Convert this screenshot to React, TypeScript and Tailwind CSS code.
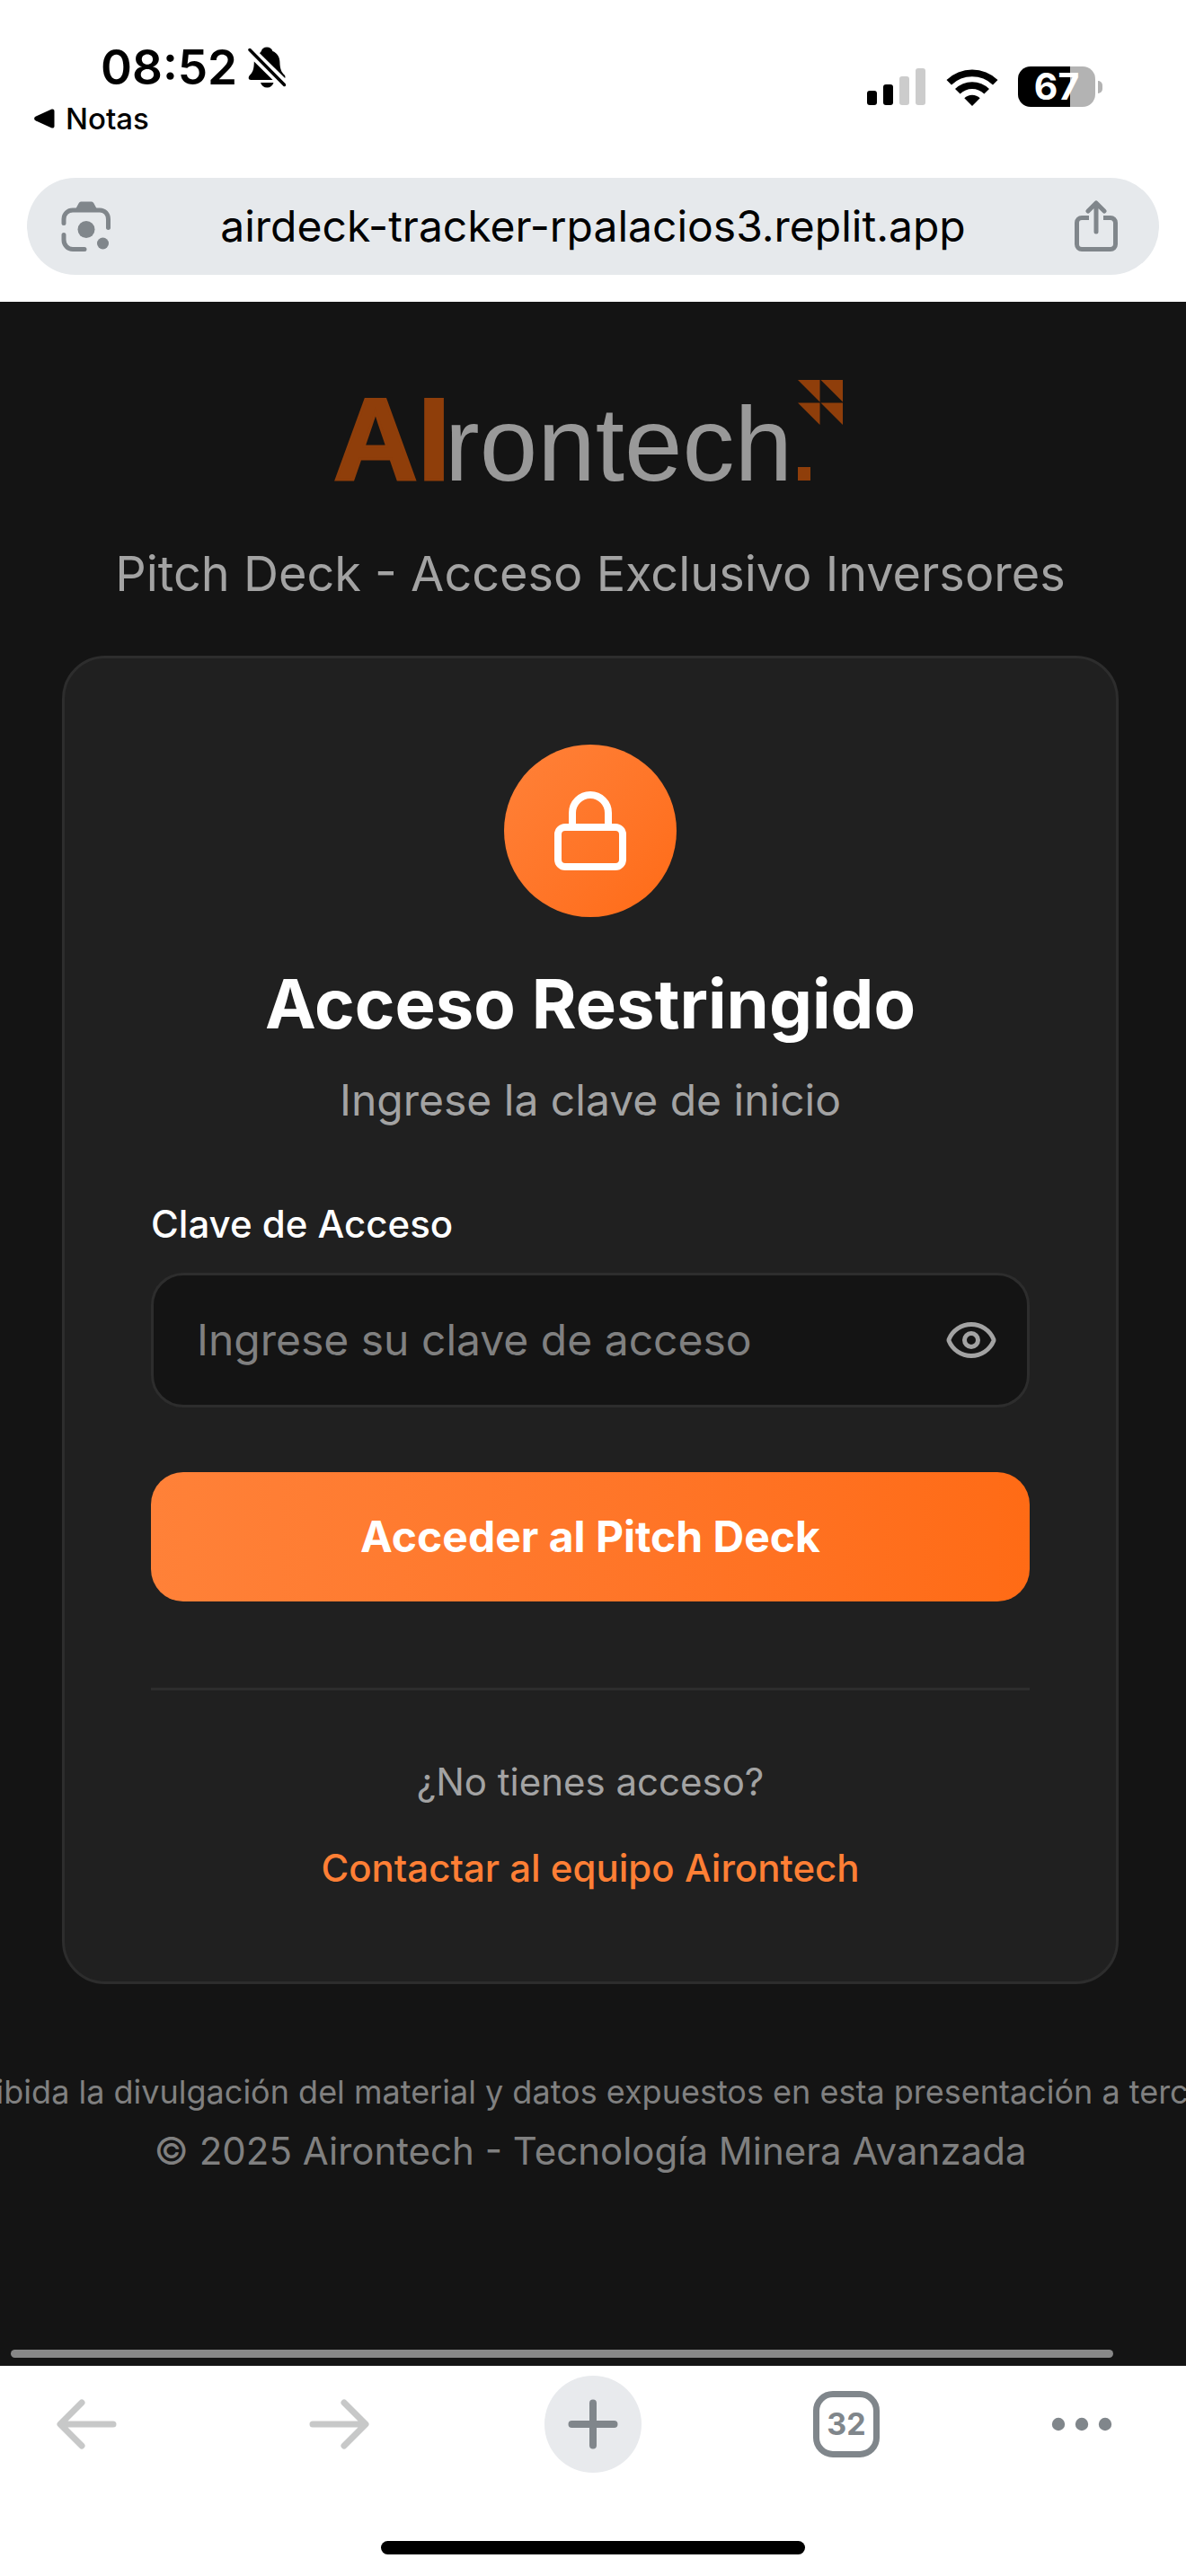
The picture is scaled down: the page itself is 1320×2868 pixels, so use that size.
import { useState } from "react";
import { Eye, EyeOff, Lock } from "lucide-react";

function BellOffIcon() {
  return (
    <svg className="h-[46px] w-[42px]" viewBox="0 0 42 46" aria-label="Silencio">
      <path
        d="M21 0.5c3.2 0 5.600 1.800 6.400 4.400 5.200 2 7.800 6.400 8 12 .2 7.600 1.600 11 5.200 14.600 1 1 1 2.500.6 3.600L13 7.200c.8-.9 1.300-1.600 1.800-2.300.8-2.600 3-4.400 6.200-4.400Z"
        fill="#000"
      />
      <path d="M6.800 16.500 27.500 37H3.200C.4 37 0 34 1.800 32c3.200-3.300 5-6.500 5-15.500Z" fill="#000" />
      <path d="M14 40h14.500c-1 3.500-3.700 5.500-7.200 5.500S15 43.500 14 40Z" fill="#000" />
      <path d="M2 3.500 40.500 42.500" stroke="#000" strokeWidth="3.500" strokeLinecap="round" />
    </svg>
  );
}

function SignalIcon() {
  return (
    <svg className="h-[42px] w-[66px]" viewBox="0 0 66 42" aria-label="Cobertura">
      <rect x="0" y="25" width="11" height="16" rx="3" fill="#000" />
      <rect x="18" y="18" width="11" height="23" rx="3" fill="#000" />
      <rect x="36" y="9" width="11" height="32" rx="3" fill="#ccc" />
      <rect x="54" y="0" width="11" height="41" rx="3" fill="#ccc" />
    </svg>
  );
}

function WifiIcon() {
  return (
    <svg className="h-[42px] w-[58px]" viewBox="0 0 58 42" aria-label="Wi-Fi">
      <path d="M0.500 13a41 41 0 0 1 57 0l-5.500 5.500a33 33 0 0 0-46 0Z" fill="#000" />
      <path d="M10 23a27 27 0 0 1 38 0l-5.600 5.600a19 19 0 0 0-26.800 0Z" fill="#000" />
      <path d="M20.300 33.300a12.300 12.300 0 0 1 17.400 0L29 42Z" fill="#000" />
    </svg>
  );
}

function LensIcon() {
  return (
    <svg className="h-14 w-14" viewBox="0 0 56 56" fill="none" aria-hidden="true">
      <path
        d="M3 24.500V20c0-6 4.500-10 10-10h30c5.500 0 9.500 4 9.500 10v9.500M3 37.500V43c0 6 4.500 10.500 10 10.500h13"
        stroke="#80868b"
        strokeWidth="5"
        strokeLinecap="round"
      />
      <path d="M16 9l3.500-6.500C20.200 1 21.500.500 23 .500h10c1.500 0 2.800.5 3.500 2L40 9Z" fill="#80868b" />
      <circle cx="28" cy="31.500" r="9.500" fill="#80868b" />
      <circle cx="46.500" cy="47" r="6.500" fill="#80868b" />
    </svg>
  );
}

function ShareIcon() {
  return (
    <svg className="h-[58px] w-12" viewBox="0 0 48 58" fill="none" stroke="#80868b" strokeWidth="5">
      <path d="M16 19.500H8a5.500 5.500 0 0 0-5.500 5.500v24A5.500 5.500 0 0 0 8 54.500h32a5.500 5.500 0 0 0 5.500-5.500V25a5.500 5.500 0 0 0-5.500-5.500h-8" />
      <path d="M24 35V4M15 12l9-9 9 9" strokeLinecap="round" strokeLinejoin="round" />
    </svg>
  );
}

function ArrowIcon({ flipped = false }: { flipped?: boolean }) {
  return (
    <svg
      className="h-[60px] w-[68px]"
      viewBox="0 0 68 60"
      fill="none"
      stroke="#c7c8c8"
      strokeWidth="7"
      strokeLinecap="round"
      strokeLinejoin="round"
    >
      <path d={flipped ? "M4 30h58M39 6l24 24-24 24" : "M64 30H6M29 6 5 30l24 24"} />
    </svg>
  );
}

function AirontechLogo() {
  return (
    <svg className="h-[150px] w-[576px] overflow-visible" viewBox="0 0 576 150" role="img" aria-label="AIrontech">
      <g fontFamily="'Liberation Sans', Arial, sans-serif">
        <text x="2" y="114" fontSize="130" fontWeight="700" fill="#8f3e0a" stroke="#8f3e0a" strokeWidth="3">
          AI
        </text>
        <text x="126" y="115" fontSize="116" fill="#999">
          rontech
        </text>
      </g>
      <rect x="519" y="100" width="14" height="15" fill="#8f3e0a" />
      <path
        d="M519 3h24.500v24.500ZM544.500 3H569v24.500ZM519 28.500h24.500V53ZM544.500 28.500H569V53Z"
        fill="#8f3e0a"
      />
    </svg>
  );
}

function StatusBar() {
  return (
    <div className="flex items-start justify-between pt-10 pr-[93px] pl-[37px]">
      <div>
        <div className="flex items-center gap-3 pl-[75px]">
          <span className="text-[53px] leading-[70px] font-semibold">08:52</span>
          <BellOffIcon />
        </div>
        <a href="#notas" className="flex items-center gap-3 text-[33px] leading-[44px] font-medium">
          <svg className="h-[22px] w-6" viewBox="0 0 24 22" aria-hidden="true">
            <path d="M3 8.500 20 .800c2-.8 3.500 0 3.500 2v16.400c0 2-1.500 2.800-3.500 2L3 13.500c-2.500-1.200-2.500-3.800 0-5Z" />
          </svg>
          Notas
        </a>
      </div>
      <div className="mt-[34px] flex items-center gap-[22px]">
        <SignalIcon />
        <WifiIcon />
        <div className="flex items-center gap-[3px]">
          <div className="flex h-[45px] w-[86px] items-center justify-center rounded-[14px] bg-[linear-gradient(90deg,#000_67%,#b3b3b3_67%)] text-[41px] leading-none font-bold text-white">
            67
          </div>
          <div className="h-[14px] w-[5px] rounded-r-full bg-[#b3b3b3]" />
        </div>
      </div>
    </div>
  );
}

function AddressBar() {
  return (
    <div className="mx-[30px] mt-11 mb-[30px] flex h-[108px] items-center justify-between rounded-full bg-[#e6e9ec] pr-[46px] pl-[38px]">
      <button type="button" aria-label="Buscar con Lens">
        <LensIcon />
      </button>
      <span className="text-[48px] leading-[60px]">airdeck-tracker-rpalacios3.replit.app</span>
      <button type="button" aria-label="Compartir">
        <ShareIcon />
      </button>
    </div>
  );
}

function AccessCard() {
  const [visible, setVisible] = useState(false);
  return (
    <section className="w-full rounded-[48px] border-[3px] border-[#2d2d2d] bg-[#202020] p-24">
      <div className="flex flex-col items-center">
        <div className="flex size-48 items-center justify-center rounded-full bg-linear-to-br from-[#ff8138] to-[#ff6b15]">
          <Lock className="size-24 text-white" />
        </div>
        <h1 className="mt-12 text-[76px] leading-[96px] font-bold text-white">Acceso Restringido</h1>
        <p className="mt-6 text-[48px] leading-[72px] text-[#a3a3a3]">Ingrese la clave de inicio</p>
      </div>
      <form className="mt-[72px]" onSubmit={(event) => event.preventDefault()}>
        <label htmlFor="clave" className="block text-[42px] leading-[60px] font-medium text-white">
          Clave de Acceso
        </label>
        <div className="mt-6 flex h-[150px] items-center rounded-[36px] border-[3px] border-[#2d2d2d] bg-[#141414] pr-8 pl-12">
          <input
            id="clave"
            type={visible ? "text" : "password"}
            placeholder="Ingrese su clave de acceso"
            className="min-w-0 flex-1 bg-transparent text-[48px] leading-[72px] text-white outline-none placeholder:text-[#808080]"
          />
          <button
            type="button"
            aria-label={visible ? "Ocultar clave" : "Mostrar clave"}
            onClick={() => setVisible(!visible)}
            className="text-[#a3a3a3]"
          >
            {visible ? <EyeOff className="size-[60px]" /> : <Eye className="size-[60px]" />}
          </button>
        </div>
        <button
          type="submit"
          className="mt-[72px] h-36 w-full rounded-[36px] bg-linear-to-r from-[#ff8138] to-[#ff6b15] text-[48px] leading-[72px] font-bold text-white"
        >
          Acceder al Pitch Deck
        </button>
      </form>
      <div className="mt-24 flex flex-col items-center border-t-[3px] border-[#2d2d2d] pt-[72px] text-[42px] leading-[60px]">
        <p className="text-[#a3a3a3]">¿No tienes acceso?</p>
        <a href="#contacto" className="mt-9 font-medium text-[#ff7f35]">
          Contactar al equipo Airontech
        </a>
      </div>
    </section>
  );
}

function BottomBar() {
  return (
    <nav className="flex flex-1 flex-col items-center justify-between bg-white pt-[11px] pb-6">
      <div className="flex w-full items-center justify-between px-[42px]">
        <button type="button" aria-label="Atrás" className="flex w-[108px] justify-center">
          <ArrowIcon />
        </button>
        <button type="button" aria-label="Adelante" className="flex w-[108px] justify-center">
          <ArrowIcon flipped />
        </button>
        <button
          type="button"
          aria-label="Nueva pestaña"
          className="flex size-[108px] items-center justify-center rounded-full bg-[#e8eaed]"
        >
          <svg className="size-14" viewBox="0 0 56 56" stroke="#80868b" strokeWidth="8" strokeLinecap="round">
            <path d="M28 4.500v47M4.500 28h47" />
          </svg>
        </button>
        <button type="button" aria-label="Pestañas: 32" className="flex w-[108px] justify-center">
          <span className="flex size-[74px] items-center justify-center rounded-[22px] border-[7px] border-[#80868b] text-[34px] leading-none font-bold text-[#80868b]">
            32
          </span>
        </button>
        <button type="button" aria-label="Más opciones" className="flex w-[108px] justify-start">
          <svg className="h-4 w-[68px]" viewBox="0 0 68 16" fill="#80868b">
            <circle cx="8" cy="8" r="7.200" />
            <circle cx="34" cy="8" r="7.200" />
            <circle cx="60" cy="8" r="7.200" />
          </svg>
        </button>
      </div>
      <div className="h-[15px] w-[472px] rounded-full bg-black" />
    </nav>
  );
}

export default function App() {
  return (
    <div className="flex min-h-screen flex-col bg-white font-['Inter',sans-serif] text-black">
      <header>
        <StatusBar />
        <AddressBar />
      </header>
      <main className="flex flex-col overflow-hidden bg-[#141414]">
        <div className="flex flex-col items-center pt-[84px] pr-[75px] pl-[69px]">
          <AirontechLogo />
          <p className="mt-7 mb-[50px] text-[54px] leading-[82px] text-[#a3a3a3]">
            Pitch Deck - Acceso Exclusivo Inversores
          </p>
          <AccessCard />
          <footer className="mt-24 flex flex-col items-center text-[#808080]">
            <p className="text-[36px] leading-[48px] whitespace-nowrap">
              Prohibida la divulgación del material y datos expuestos en esta presentación a terceros
            </p>
            <p className="mt-3 text-[42px] leading-[60px]">© 2025 Airontech - Tecnología Minera Avanzada</p>
          </footer>
        </div>
        <div className="mt-[191px] mr-[81px] mb-[9px] ml-3 h-[9px] rounded-full bg-[#888]" />
      </main>
      <BottomBar />
    </div>
  );
}
